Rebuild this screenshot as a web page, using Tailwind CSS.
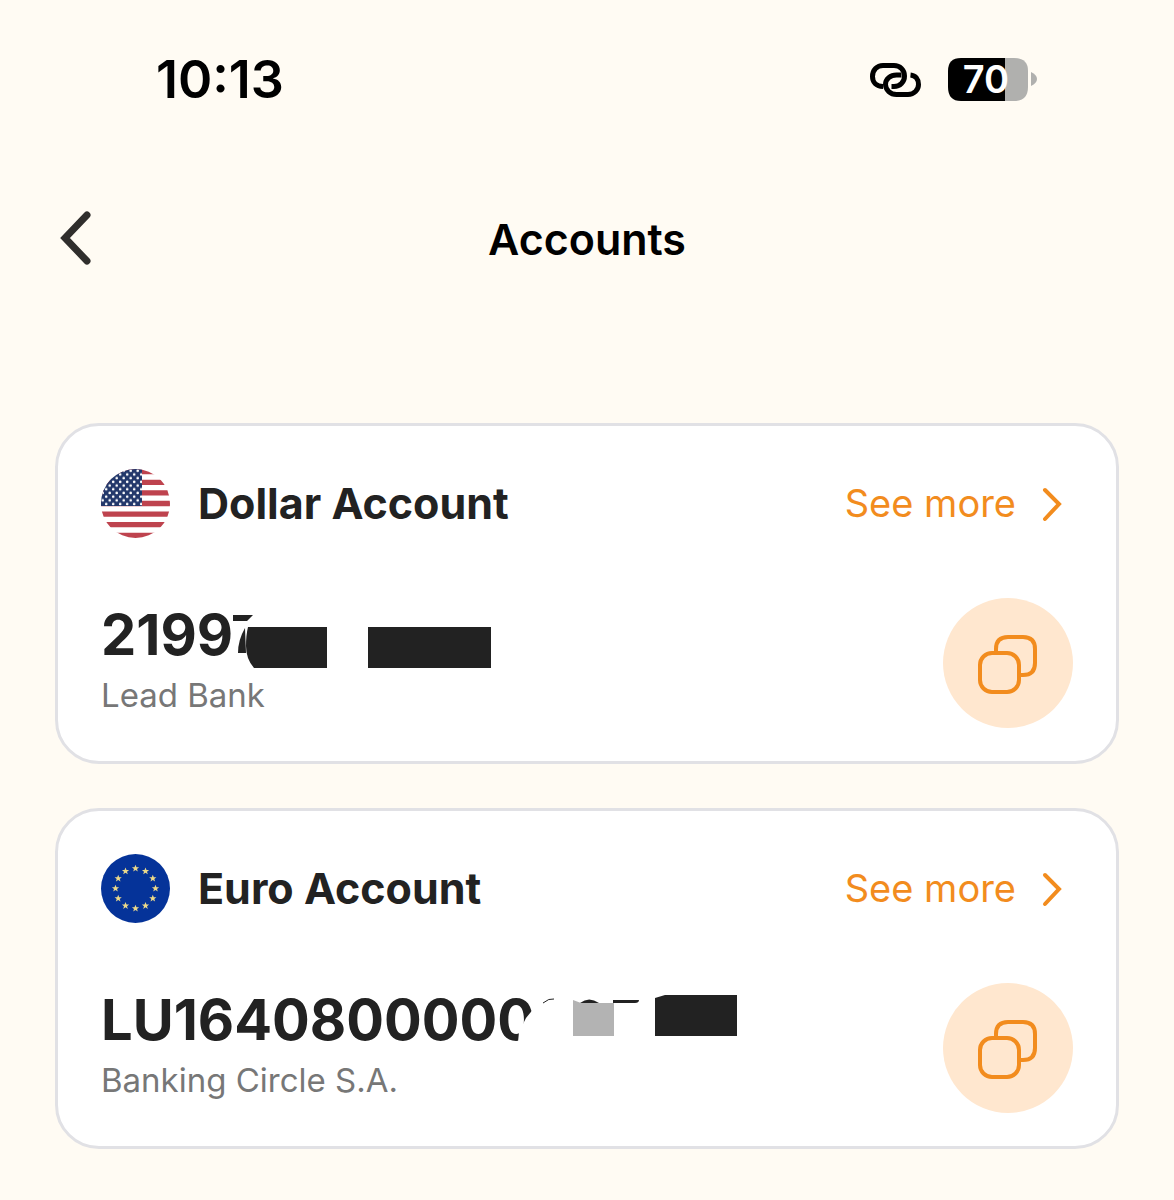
<!DOCTYPE html>
<html lang="en">

<head>
  <meta charset="UTF-8" />
  <meta name="viewport" content="width=device-width, initial-scale=1.0" />
  <title>Accounts</title>
  <script src="https://cdn.jsdelivr.net/npm/@tailwindcss/browser@4"></script>
</head>

<body class="min-h-screen bg-[#fffbf3] font-['Inter',sans-serif] text-[#222222]">
  <!-- status bar -->
  <div class="flex h-40 items-center justify-between pl-39 pr-[137px] text-black">
    <time class="text-[52px] leading-none font-semibold">10:13</time>
    <div class="flex items-center gap-6">
      <svg class="h-9 w-14" viewBox="0 0 56 36" fill="none" stroke="#000" stroke-width="5" stroke-linecap="butt" aria-hidden="true">
        <path d="M16 24.500C9 24.500 5.500 20 5.500 14.500C5.500 8 10 3.500 16 3.500H27C33 3.500 37.500 8 37.500 14C37.500 20 33 24.500 27 24.500H24.500" />
        <path d="M34.500 13H29.500C23.500 13 18.500 17 18.500 22.500C18.500 28 23.500 32.500 29.500 32.500H41C47 32.500 51.500 28 51.500 22.500C51.500 17 48.500 13.500 43.500 13" />
      </svg>
      <svg class="h-11 w-[90px] overflow-visible" viewBox="0 0 90 44" role="img" aria-label="Battery 70%">
        <path d="M14 0H58V43H14Q1 43 1 29V13Q1 0 14 0Z" fill="#000" />
        <path d="M58 0H67Q81 0 81 13V29Q81 43 67 43H58Z" fill="#b0b0ae" />
        <path d="M84 14Q90 17 90 21T84 28Z" fill="#b0b0ae" />
        <text x="39" y="35" text-anchor="middle" fill="#fff" class="text-[38px] font-semibold">70</text>
      </svg>
    </div>
  </div>

  <header class="grid h-[154px] grid-cols-3 items-center px-14">
    <button type="button" aria-label="Back" class="w-10">
      <svg class="h-14 w-10" viewBox="0 0 40 56" fill="none" stroke="#302e2c" stroke-width="7" stroke-linecap="round" stroke-linejoin="miter">
        <path d="M31 6L9 29L31 52" />
      </svg>
    </button>
    <h1 class="pt-1 text-center text-[43px] leading-none font-semibold text-black">Accounts</h1>
  </header>

  <main class="flex flex-col gap-11 px-[55px] pt-[109px] pb-12">
    <section class="rounded-[44px] border-3 border-[#e1e1e5] bg-white px-[43px] pt-[43px] pb-[33px]">
      <div class="flex items-center">
        <svg class="h-[69px] w-[69px]" viewBox="0 0 69 69" role="img" aria-label="United States">
          <defs>
            <clipPath id="round"><circle cx="34.500" cy="34.500" r="34.500" /></clipPath>
            <pattern id="stars" width="7" height="7.400" patternUnits="userSpaceOnUse">
              <circle cx="1.700" cy="1.800" r="1.300" fill="#fff" />
              <circle cx="5.200" cy="5.500" r="1.300" fill="#fff" />
            </pattern>
          </defs>
          <g clip-path="url(#round)">
            <rect width="69" height="69" fill="#fff" />
            <path d="M0 2.700H69M0 13.300H69M0 23.900H69M0 34.500H69M0 45.100H69M0 55.700H69M0 66.300H69" stroke="#be434e" stroke-width="5.300" />
            <rect width="41" height="37" fill="#23386b" />
            <rect width="41" height="37" fill="url(#stars)" />
          </g>
        </svg>
        <h2 class="ml-7 text-[43px] leading-none font-bold">Dollar Account</h2>
        <a href="#dollar" class="ml-auto flex items-center gap-6 pr-[9px] text-[38px] leading-none text-[#f28c1e]"><span class="pb-[2px]">See more</span>
          <svg class="h-9 w-6" viewBox="0 0 24 36" fill="none" stroke="currentColor" stroke-width="4" stroke-linecap="round"><path d="M5 4L19 18L5 33" /></svg>
        </a>
      </div>
      <div class="mt-15 flex items-center justify-between">
        <div class="pb-2">
          <p class="relative text-[56px] leading-[64px] font-bold">21997
            <svg class="absolute top-0 left-0 h-[70px] w-[400px]" viewBox="0 0 400 70" aria-hidden="true">
              <path d="M130 0H400V70H130Z" fill="#fff" />
              <path d="M132 12H152L146 18H132ZM144 25Q137 37 137 50H145Z" fill="#222" />
              <path d="M147 24H226V65H153Q145 56 145 43Q145 32 147 24ZM267 24H390V65H267Z" fill="#222" />
            </svg>
          </p>
          <p class="mt-2 text-[33px] leading-[40px] text-[#777777]">Lead Bank</p>
        </div>
        <button type="button" aria-label="Copy account number" class="flex size-[130px] items-center justify-center rounded-full bg-[#ffe7cf]">
          <svg class="size-16" viewBox="0 0 64 64" fill="none" stroke="#f28c1e" stroke-width="4">
            <rect x="4" y="22" width="39" height="39" rx="12" />
            <path d="M20 22V18Q20 6 32 6H47Q59 6 59 18V32Q59 44 47 44H43" />
          </svg>
        </button>
      </div>
    </section>

    <section class="rounded-[44px] border-3 border-[#e1e1e5] bg-white px-[43px] pt-[43px] pb-[33px]">
      <div class="flex items-center">
        <svg class="h-[69px] w-[69px]" viewBox="0 0 69 69" role="img" aria-label="European Union">
          <defs>
            <path id="star" d="M0-3.800L1-1.200H3.600L1.500.5L2.300 3.100L0 1.500L-2.300 3.100L-1.500.5L-3.600-1.200H-1Z" fill="#ecd98a" />
          </defs>
          <circle cx="34.500" cy="34.500" r="34.500" fill="#053399" />
          <use href="#star" x="34.500" y="14.500" /><use href="#star" x="44.500" y="17.200" />
          <use href="#star" x="51.800" y="24.500" /><use href="#star" x="54.500" y="34.500" />
          <use href="#star" x="51.800" y="44.500" /><use href="#star" x="44.500" y="51.800" />
          <use href="#star" x="34.500" y="54.500" /><use href="#star" x="24.500" y="51.800" />
          <use href="#star" x="17.200" y="44.500" /><use href="#star" x="14.500" y="34.500" />
          <use href="#star" x="17.200" y="24.500" /><use href="#star" x="24.500" y="17.200" />
        </svg>
        <h2 class="ml-7 text-[43px] leading-none font-bold">Euro Account</h2>
        <a href="#euro" class="ml-auto flex items-center gap-6 pr-[9px] text-[38px] leading-none text-[#f28c1e]"><span class="pb-[2px]">See more</span>
          <svg class="h-9 w-6" viewBox="0 0 24 36" fill="none" stroke="currentColor" stroke-width="4" stroke-linecap="round"><path d="M5 4L19 18L5 33" /></svg>
        </a>
      </div>
      <div class="mt-15 flex items-center justify-between">
        <div class="pb-2">
          <p class="relative text-[56px] leading-[64px] font-bold">LU1640800000
            <svg class="absolute top-0 left-0 h-16 w-[650px]" viewBox="0 0 650 64" aria-hidden="true">
              <path d="M434 0V19L425 30L418 44L416 64H650V0Z" fill="#fff" />
              <path d="M442 15Q448 10 453 11" stroke="#222" fill="none" />
              <path d="M472 12L480 15H513V48H472Z" fill="#b3b3b3" />
              <path d="M479 15Q488 8 498 15ZM512 12H538Q538 15 534 15H512Z" fill="#222" />
              <path d="M554 10L564 7H636V48H554Z" fill="#222" />
            </svg>
          </p>
          <p class="mt-2 text-[33px] leading-[40px] text-[#777777]">Banking Circle S.A.</p>
        </div>
        <button type="button" aria-label="Copy account number" class="flex size-[130px] items-center justify-center rounded-full bg-[#ffe7cf]">
          <svg class="size-16" viewBox="0 0 64 64" fill="none" stroke="#f28c1e" stroke-width="4">
            <rect x="4" y="22" width="39" height="39" rx="12" />
            <path d="M20 22V18Q20 6 32 6H47Q59 6 59 18V32Q59 44 47 44H43" />
          </svg>
        </button>
      </div>
    </section>
  </main>
</body>

</html>
